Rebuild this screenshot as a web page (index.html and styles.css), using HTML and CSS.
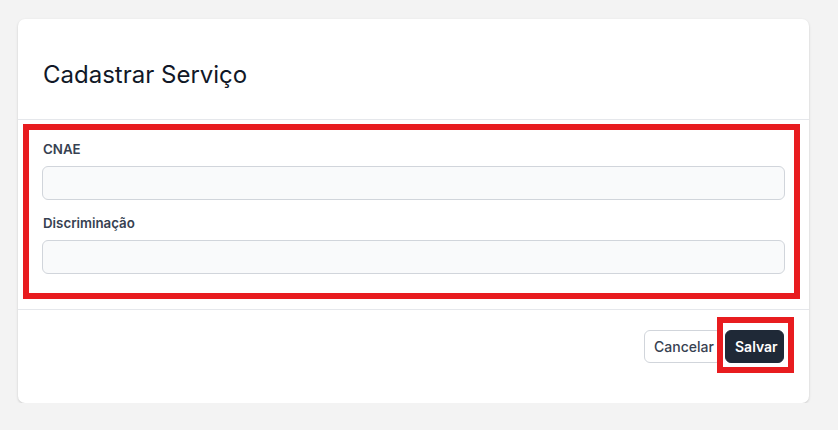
FILE: index.html
```html
<!DOCTYPE html>
<html lang="pt">
<head>
<meta charset="utf-8">
<link rel="stylesheet" href="styles.css">
</head>
<body>
<div class="card">
  <div class="card-header">
    <h1 class="title">Cadastrar Serviço</h1>
  </div>
  <div class="card-body">
    <div class="field">
      <label class="label">CNAE</label>
      <input class="input" type="text">
    </div>
    <div class="field">
      <label class="label">Discriminação</label>
      <input class="input" type="text">
    </div>
    <div class="highlight highlight-body"></div>
  </div>
  <div class="card-footer">
    <button class="btn btn-cancel">Cancelar</button>
    <div class="save-wrap">
      <button class="btn btn-save">Salvar</button>
      <div class="highlight highlight-save"></div>
    </div>
  </div>
</div>
</body>
</html>
```
FILE: styles.css
```css
* { box-sizing: border-box; }
html, body { margin: 0; }
body {
  background: #f3f3f3;
  padding: 19px 29px 0 18px;
  font-family: Inter, "Noto Sans", sans-serif;
  color: #111827;
}
.card {
  background: #fff;
  border-radius: 7px;
  box-shadow: 0 1px 3px rgba(0,0,0,0.12), 0 1px 2px rgba(0,0,0,0.06);
  width: 791px;
}
.card-header {
  padding: 42px 25px 0 25px;
  height: 101px;
  border-bottom: 1px solid #e5e7eb;
}
.title {
  margin: 0;
  font-size: 24px;
  line-height: 28px;
  font-weight: 400;
  color: #111827;
}
.card-body {
  position: relative;
  padding: 19px 24px 35px 24px;
  border-bottom: 1px solid #e5e7eb;
  display: flex;
  flex-direction: column;
  gap: 13px;
}
.field { display: flex; flex-direction: column; gap: 7px; }
.label {
  font-size: 13.3px;
  line-height: 20px;
  font-weight: 600;
  color: #374151;
  padding-left: 1px;
}
.input {
  height: 34px;
  width: 100%;
  border: 1px solid #d1d5db;
  border-radius: 6px;
  background: #f9fafb;
  font: inherit;
  outline: none;
}
.card-footer {
  padding: 20px 25px 40px 25px;
  display: flex;
  justify-content: flex-end;
  align-items: center;
  gap: 3px;
}
.btn {
  height: 33px;
  border-radius: 6px;
  font-family: Inter, "Noto Sans", sans-serif;
  font-size: 14px;
  padding: 0 9px;
  cursor: pointer;
}
.btn-cancel {
  background: #fff;
  border: 1px solid #d1d5db;
  color: #374151;
  font-weight: 500;
  width: 78px;
}
.btn-save {
  background: #1f2937;
  border: 1px solid #1f2937;
  color: #fff;
  font-weight: 600;
  width: 59px;
}
.save-wrap { position: relative; display: flex; }
.highlight {
  position: absolute;
  border: 6px solid #e81c1f;
  pointer-events: none;
}
.highlight-body { left: 5px; right: 9px; top: 4px; bottom: 10px; }
.highlight-save { left: -8px; right: -10px; top: -13px; bottom: -10px; }
```
